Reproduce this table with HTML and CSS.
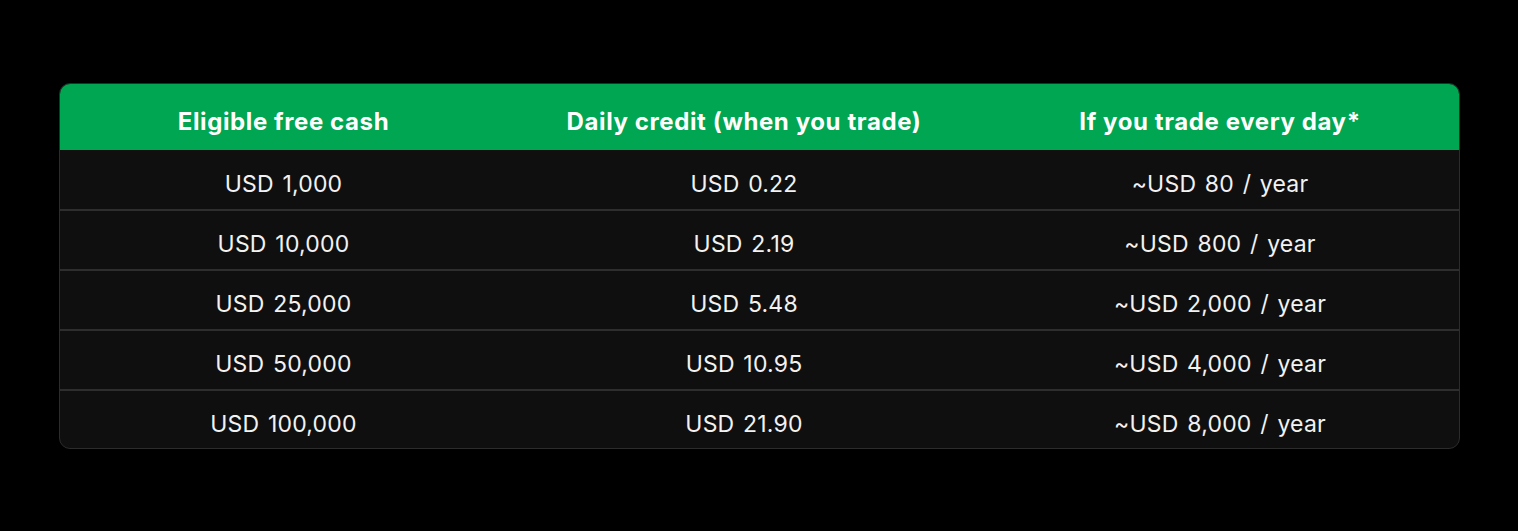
FILE: index.html
```html
<!DOCTYPE html>
<html lang="en">
<head>
    <meta charset="UTF-8">
    <meta name="viewport" content="width=device-width, initial-scale=1.0">
    <title>Free cash daily credit</title>
    <link rel="stylesheet" href="styles.css">
</head>
<body>
    <!-- Tabela de crédito diário -->
    <div class="credit-wrap">
        <table class="credit-table">
            <thead>
                <tr>
                    <th class="col-cash">Eligible free cash</th>
                    <th class="col-daily">Daily credit (when you trade)</th>
                    <th class="col-year">If you trade every day*</th>
                </tr>
            </thead>
            <tbody>
                <tr>
                    <td>USD 1,000</td>
                    <td>USD 0.22</td>
                    <td>~USD 80 / year</td>
                </tr>
                <tr>
                    <td>USD 10,000</td>
                    <td>USD 2.19</td>
                    <td>~USD 800 / year</td>
                </tr>
                <tr>
                    <td>USD 25,000</td>
                    <td>USD 5.48</td>
                    <td>~USD 2,000 / year</td>
                </tr>
                <tr>
                    <td>USD 50,000</td>
                    <td>USD 10.95</td>
                    <td>~USD 4,000 / year</td>
                </tr>
                <tr>
                    <td>USD 100,000</td>
                    <td>USD 21.90</td>
                    <td>~USD 8,000 / year</td>
                </tr>
            </tbody>
        </table>
    </div>
</body>
</html>
```

FILE: styles.css
```css
/* Estilos básicos */
body {
    font-family: Inter, "Noto Sans", sans-serif;
    background-color: #000;
    margin: 0;
    padding: 83px 0 0 59px;
}

.credit-wrap {
    width: 1399px;
    border: 1px solid #2c2c2c;
    border-radius: 11px;
    overflow: hidden;
    background-color: #0f0f0f;
}

.credit-table {
    width: 100%;
    border-collapse: collapse;
    table-layout: fixed;
}

.credit-table th {
    background-color: #00a651;
    color: #fff;
    font-size: 24px;
    font-weight: 700;
    letter-spacing: 0.6px;
    height: 66px;
    padding: 8px 0 0;
    box-sizing: border-box;
    text-align: center;
}

.col-cash {
    width: 447px;
}

.col-daily {
    width: 474px;
}

.credit-table td {
    color: #f2f2f2;
    font-size: 23px;
    font-weight: 400;
    letter-spacing: 0.2px;
    word-spacing: 2px;
    height: 60px;
    padding: 8px 0 0;
    box-sizing: border-box;
    text-align: center;
    border-bottom: 2px solid #2e2e2e;
}

.credit-table tr:last-child td {
    border-bottom: none;
    height: 58px;
}
```
